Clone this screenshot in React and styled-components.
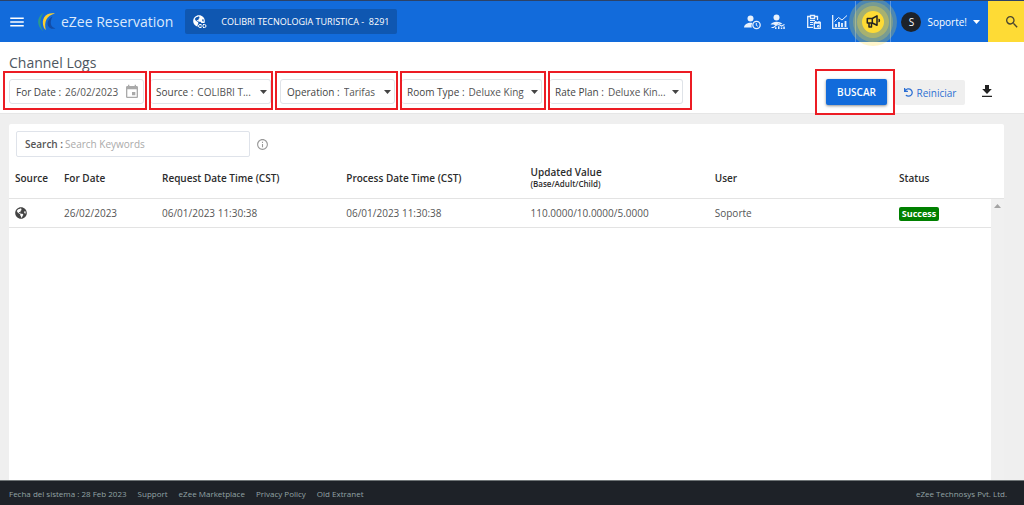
import styled, { createGlobalStyle } from 'styled-components'
import { FaGlobeAmericas, FaUndo } from 'react-icons/fa'
import { MdEvent, MdMenu, MdSearch, MdInfoOutline } from 'react-icons/md'

const GlobalStyle = createGlobalStyle`
  * {
    box-sizing: border-box;
  }

  body {
    margin: 0;
    background-color: #efefef;
    color: #555;
    font-family: "Open Sans", "Noto Sans", sans-serif;
    font-size: 10px;
    line-height: 14px;
  }

  button, input, select {
    font: inherit;
    color: inherit;
    margin: 0;
    padding: 0;
    border: 0;
    background: none;
  }

  button {
    cursor: pointer;
  }

  a {
    color: inherit;
    text-decoration: none;
  }

  svg {
    display: block;
    flex: none;
  }
`

const Page = styled.div`
  display: flex;
  flex-direction: column;
  min-height: 100vh;
`

/* ---- top bar ---- */

const TopBar = styled.header`
  position: relative;
  z-index: 1;
  display: flex;
  align-items: center;
  height: 42px;
  padding-left: 8px;
  border-top: 1px solid #2c4267;
  background-color: #126bdb;
  color: #fff;
`

const Brand = styled.a`
  display: flex;
  align-items: center;
  gap: 4px;
  margin: 0 12px 0 11px;
  font-size: 14px;
  line-height: 20px;
  color: #dce9fb;
`

const Property = styled.div`
  display: flex;
  align-items: center;
  gap: 14px;
  height: 25px;
  width: 212px;
  padding-left: 8px;
  border-radius: 2px;
  background-color: #0f57b1;
  font-size: 9px;
  white-space: pre;
`

const TopActions = styled.div`
  display: flex;
  align-items: center;
  align-self: stretch;
  margin-left: auto;
`

const IconGroup = styled.div`
  display: flex;
  margin-left: 10px;
`

const IconButton = styled.button`
  display: flex;
  align-items: center;
  justify-content: center;
  width: 26px;
  height: 26px;
`

const NewsCell = styled.div`
  display: flex;
  align-items: center;
  justify-content: center;
  align-self: stretch;
  width: 36px;
  margin-left: 2px;
  border: solid rgba(255, 255, 255, 0.3);
  border-width: 0 1px;
`

const NewsButton = styled.button`
  display: flex;
  align-items: center;
  justify-content: center;
  width: 22px;
  height: 22px;
  border-radius: 50%;
  background-color: #fedb35;
  color: #222;
  box-shadow:
    0 0 0 5px rgba(254, 219, 53, 0.35),
    0 0 0 9px rgba(254, 219, 53, 0.25),
    0 0 0 13px rgba(254, 219, 53, 0.25);
`

const UserMenu = styled.button`
  display: flex;
  align-items: center;
  gap: 6px;
  padding: 0 8px 0 10px;
`

const Avatar = styled.span`
  width: 20px;
  height: 20px;
  border-radius: 50%;
  background-color: #1d2229;
  line-height: 20px;
  text-align: center;
`

const SearchButton = styled.button`
  display: flex;
  align-items: center;
  justify-content: flex-end;
  align-self: stretch;
  width: 36px;
  padding-right: 4px;
  background-color: #fedb35;
  color: #4a4630;
`

/* ---- filters ---- */

const FilterBar = styled.section`
  height: 72px;
  padding: 12px 0 0 3px;
  border-bottom: 1px solid #e6e6e6;
  background-color: #fff;
`

const Title = styled.h1`
  margin: 0 0 0 6px;
  font-size: 14px;
  line-height: 17px;
  font-weight: 500;
  color: #4d5660;
`

const Filters = styled.form`
  display: flex;
  align-items: flex-start;
  gap: 2px;
`

const Highlight = styled.div`
  width: ${props => props.$width}px;
  height: 39px;
  padding: 6px ${props => props.$end || 0}px 4px ${props => props.$start || 0}px;
  border: 2px solid #ec1c24;
`

const Field = styled.label`
  display: flex;
  align-items: center;
  gap: 4px;
  height: 25px;
  padding: 0 3px 0 ${props => props.$flush ? '5px' : '6px'};
  border: 1px solid #dfe3e8;
  border-left-width: ${props => props.$flush ? '0' : '1px'};
  border-radius: 3px;
  color: #444;
  font-weight: 500;
  white-space: nowrap;

  input, select {
    flex: 1;
    min-width: 0;
    appearance: none;
    color: #555;
    font-weight: 400;
    outline: 0;
  }
`

const Actions = styled.div`
  display: flex;
  align-items: flex-start;
  margin: -2px 0 0 auto;
  padding-right: 32px;
`

const SubmitHighlight = styled.div`
  padding: 8px 6px 8px 9px;
  border: 2px solid #ec1c24;
`

const SubmitButton = styled.button`
  display: block;
  width: 61px;
  height: 26px;
  border-radius: 2px;
  background-color: #126bdb;
  color: #fff;
  font-weight: 600;
  box-shadow: 0 1px 3px rgba(0, 0, 0, 0.45);
`

const ResetButton = styled.button`
  display: flex;
  align-items: center;
  justify-content: center;
  gap: 4px;
  width: 70px;
  height: 25px;
  margin-top: 11px;
  border-radius: 2px;
  background-color: #efefef;
  color: #2c6fd3;
  font-weight: 500;
`

const DownloadButton = styled.button`
  margin: 16px 0 0 17px;
  color: #222;
`

/* ---- logs ---- */

const Main = styled.main`
  display: flex;
  flex: 1;
  padding: 10px 20px 0 9px;
`

const Card = styled.div`
  display: flex;
  flex: 1;
  flex-direction: column;
  border-radius: 2px 2px 0 0;
  background-color: #fff;
`

const SearchRow = styled.div`
  display: flex;
  align-items: center;
  gap: 6px;
  padding: 7px 7px 1px;
  color: #999;
`

const SearchField = styled.label`
  display: flex;
  align-items: center;
  gap: 2px;
  width: 234px;
  height: 26px;
  padding: 0 8px;
  border: 1px solid #dfe3ea;
  border-radius: 2px;
  color: #555;
  font-weight: 600;

  input {
    flex: 1;
    min-width: 0;
    font-weight: 400;
    outline: 0;
  }

  input::placeholder {
    color: #aaa;
    opacity: 1;
  }
`

const TableArea = styled.div`
  display: flex;
  flex: 1;
`

const Table = styled.table`
  flex: 1;
  align-self: flex-start;
  width: 100%;
  min-width: 0;
  table-layout: fixed;
  border-collapse: separate;
  border-spacing: 0;

  th, td {
    padding: 0 0 0 6px;
    border-bottom: 1px solid #e3e3e3;
    text-align: left;
    white-space: nowrap;
  }

  th {
    height: 41px;
    color: #2c2c2c;
    font-weight: 600;
    line-height: 12px;
  }

  th small {
    display: block;
    font-size: 8px;
  }

  td {
    height: 29px;
  }
`

const Col = styled.col`
  width: ${props => props.$width || 'auto'};
`

const ScrollTrack = styled.div`
  flex: none;
  width: 13px;
  margin-top: 40px;
  padding: 5px 3px;
  border-top: 1px solid #e3e3e3;
  background-color: #f0f0f0;
  color: #a3a3a3;
`

const Badge = styled.span`
  display: inline-block;
  width: 40px;
  border-radius: 2px;
  background-color: #008000;
  color: #fff;
  font-size: 9px;
  font-weight: 700;
  text-align: center;
`

/* ---- footer ---- */

const Footer = styled.footer`
  display: flex;
  align-items: center;
  gap: 11px;
  height: 25px;
  padding: 2px 17px 0 9px;
  border-top: 1px solid #6f7577;
  background-color: #1e2228;
  color: #93a3a5;
  font-size: 8px;

  a:last-child {
    margin-left: auto;
  }
`

const Caret = () => (
  <svg width="7" height="4" viewBox="0 0 7 4" fill="currentColor">
    <path d="M0 0h7L3.5 4z" />
  </svg>
)

const Logo = () => (
  <svg width="20" height="20" viewBox="0 0 20 20">
    <path d="M7 .5C-.8 5-.8 14 6.500 19.500 2.200 13.500 2.500 6 7 .5z" fill="#2c9a8b" />
    <path d="M18 1.500C9 0 3.500 6.500 6.800 15.500c.6 1.300 1.200 2 2 2.500C6.800 10 9.500 3.500 18 1.500z" fill="#fbd02e" />
    <path d="M15.500 4.500C10.500 7 8.800 13 13 16c1.700 1.200 4 1 5.500.2-4.500-.7-6.300-5.200-3-11.700z" fill="#124da8" />
  </svg>
)

const GlobeLink = () => (
  <svg width="14" height="14" viewBox="0 0 14 14" fill="none">
    <FaGlobeAmericas size={12} color="#fff" />
    <rect x="4.500" y="8" width="9.500" height="6" rx="3" fill="#0f57b1" />
    <path d="M8.500 9.500H7a1.500 1.500 0 0 0 0 3h1.500M10 9.500h1.500a1.500 1.500 0 0 1 0 3H10M7.500 11h3.500" stroke="#fff" />
  </svg>
)

const UserClock = () => (
  <svg width="17" height="16" viewBox="0 0 17 16" fill="#e8f1fd">
    <circle cx="6.500" cy="4.500" r="3" />
    <path d="M0 13.500c0-3 3.500-4.700 6.500-4.700.7 0 1.400.1 2 .3-1 1.300-1.200 2.900-.7 4.400z" />
    <circle cx="12.500" cy="11" r="3.700" fill="none" stroke="#e8f1fd" strokeWidth="1.300" />
    <path d="M12.300 9v2.300l1.500 1" fill="none" stroke="#e8f1fd" />
  </svg>
)

const UserNetwork = () => (
  <svg width="16" height="16" viewBox="0 0 16 16" fill="#e8f1fd">
    <circle cx="6.500" cy="3.500" r="3" />
    <path d="M.5 10.500C2 8.500 4 7.700 6.500 7.700s4.500.8 6 2.300l-2 .3-2-.8-2.500 2-2.500-1z" />
    <path d="M1.500 13.500h2L6.500 11l2.500-.5 2.500 1.500 3-1.500" fill="none" stroke="#e8f1fd" strokeWidth="1.100" />
    <path d="M5 13.300h1.500V15H5zM8 12.300h1.500V15H8zM10.800 13.500h1.500V15h-1.500zM13.300 12.500h1.500V15h-1.500z" />
  </svg>
)

const ClipboardCalendar = () => (
  <svg width="16" height="16" viewBox="0 0 16 16" fill="none" stroke="#e8f1fd">
    <path d="M7 13.300H1.700V2.500H4M9 2.500h2.500V6M4.500 1.500h4v3h-4z" strokeWidth="1.300" />
    <path d="M4 6.500h5M4 8.500h3M4 10.500h3" />
    <path d="M8.300 8.300h6v6h-6zM8 9h6.600M9.700 7v1.500M13 7v1.500" strokeWidth="1.300" />
    <path d="M11.500 11.500h1.500v1.500h-1.500z" />
  </svg>
)

const ChartIcon = () => (
  <svg width="16" height="16" viewBox="0 0 16 16" fill="none" stroke="#e8f1fd">
    <path d="M.7 1v13.300H16" strokeWidth="1.300" />
    <path d="M4 13v-3M7 13V8M10 13V9M13.500 13V7" strokeWidth="1.800" />
    <path d="M2.500 7.500l4-4L10 6l5-4.500" />
  </svg>
)

const Megaphone = () => (
  <svg width="15" height="15" viewBox="0 0 15 15" fill="none" stroke="currentColor" strokeWidth="1.500" strokeLinejoin="round">
    <path d="M1.300 4.500h5L11 1.800v9.400L6.300 9h-5zM6.300 4.500V9M3 9v4h2.500V9" />
    <path d="M12.500 5.200c1.200.5 1.200 2.100 0 2.600" />
  </svg>
)

const DownloadIcon = () => (
  <svg width="10" height="13" viewBox="0 0 10 13" fill="currentColor">
    <path d="M3 0h4v4h2.800L5 9 .2 4H3zM0 10.800h10V12H0z" />
  </svg>
)

const filters = [
  { label: 'Source :', value: 'COLIBRI T...', width: 124, flush: true },
  { label: 'Operation :', value: 'Tarifas', width: 123, start: 3, end: 1 },
  { label: 'Room Type :', value: 'Deluxe King', width: 146, flush: true, end: 2 },
  { label: 'Rate Plan :', value: 'Deluxe Kin...', width: 144, flush: true, end: 7 },
]

const logs = [
  {
    date: '26/02/2023',
    requested: '06/01/2023 11:30:38',
    processed: '06/01/2023 11:30:38',
    value: '110.0000/10.0000/5.0000',
    user: 'Soporte',
    status: 'Success',
  },
]

const Header = () => (
  <TopBar>
    <button aria-label="Menu"><MdMenu size={18} /></button>
    <Brand href="#"><Logo />eZee Reservation</Brand>
    <Property><GlobeLink />{'COLIBRI TECNOLOGIA TURISTICA -  8291'}</Property>
    <TopActions>
      <IconButton aria-label="User activity"><UserClock /></IconButton>
      <IconButton aria-label="User network"><UserNetwork /></IconButton>
      <IconGroup>
        <IconButton aria-label="Bookings"><ClipboardCalendar /></IconButton>
        <IconButton aria-label="Reports"><ChartIcon /></IconButton>
      </IconGroup>
      <NewsCell>
        <NewsButton aria-label="News"><Megaphone /></NewsButton>
      </NewsCell>
      <UserMenu><Avatar>S</Avatar>Soporte!<Caret /></UserMenu>
      <SearchButton aria-label="Search"><MdSearch size={16} /></SearchButton>
    </TopActions>
  </TopBar>
)

const LogFilters = () => (
  <FilterBar>
    <Title>Channel Logs</Title>
    <Filters onSubmit={e => e.preventDefault()}>
      <Highlight $width={144} $start={4} $end={1}>
        <Field>
          For Date :
          <input type="text" defaultValue="26/02/2023" />
          <MdEvent size={16} color="#aaa" />
        </Field>
      </Highlight>
      {filters.map(item => (
        <Highlight key={item.label} $width={item.width} $start={item.start} $end={item.end}>
          <Field $flush={item.flush}>
            {item.label}
            <select defaultValue={item.value}>
              <option>{item.value}</option>
            </select>
            <Caret />
          </Field>
        </Highlight>
      ))}
      <Actions>
        <SubmitHighlight>
          <SubmitButton type="submit">BUSCAR</SubmitButton>
        </SubmitHighlight>
        <ResetButton type="reset"><FaUndo size={9} />Reiniciar</ResetButton>
        <DownloadButton type="button" aria-label="Download"><DownloadIcon /></DownloadButton>
      </Actions>
    </Filters>
  </FilterBar>
)

const LogTable = () => (
  <TableArea>
    <Table>
      <colgroup>
        <Col $width="49px" />
        <Col $width="98px" />
        <Col />
        <Col />
        <Col />
        <Col />
        <Col $width="98px" />
      </colgroup>
      <thead>
        <tr>
          <th>Source</th>
          <th>For Date</th>
          <th>Request Date Time (CST)</th>
          <th>Process Date Time (CST)</th>
          <th>Updated Value<small>(Base/Adult/Child)</small></th>
          <th>User</th>
          <th>Status</th>
        </tr>
      </thead>
      <tbody>
        {logs.map(log => (
          <tr key={log.requested}>
            <td><FaGlobeAmericas size={12} color="#444" /></td>
            <td>{log.date}</td>
            <td>{log.requested}</td>
            <td>{log.processed}</td>
            <td>{log.value}</td>
            <td>{log.user}</td>
            <td><Badge>{log.status}</Badge></td>
          </tr>
        ))}
      </tbody>
    </Table>
    <ScrollTrack>
      <svg width="7" height="4" viewBox="0 0 7 4" fill="currentColor"><path d="M0 4h7L3.500 0z" /></svg>
    </ScrollTrack>
  </TableArea>
)

const App = () => {
  return (
    <Page>
      <GlobalStyle />
      <Header />
      <LogFilters />
      <Main>
        <Card>
          <SearchRow>
            <SearchField>
              Search :
              <input type="text" placeholder="Search Keywords" />
            </SearchField>
            <MdInfoOutline size={13} />
          </SearchRow>
          <LogTable />
        </Card>
      </Main>
      <Footer>
        <span>Fecha del sistema : 28 Feb 2023</span>
        <a href="#">Support</a>
        <a href="#">eZee Marketplace</a>
        <a href="#">Privacy Policy</a>
        <a href="#">Old Extranet</a>
        <a href="#">eZee Technosys Pvt. Ltd.</a>
      </Footer>
    </Page>
  )
}

export default App
